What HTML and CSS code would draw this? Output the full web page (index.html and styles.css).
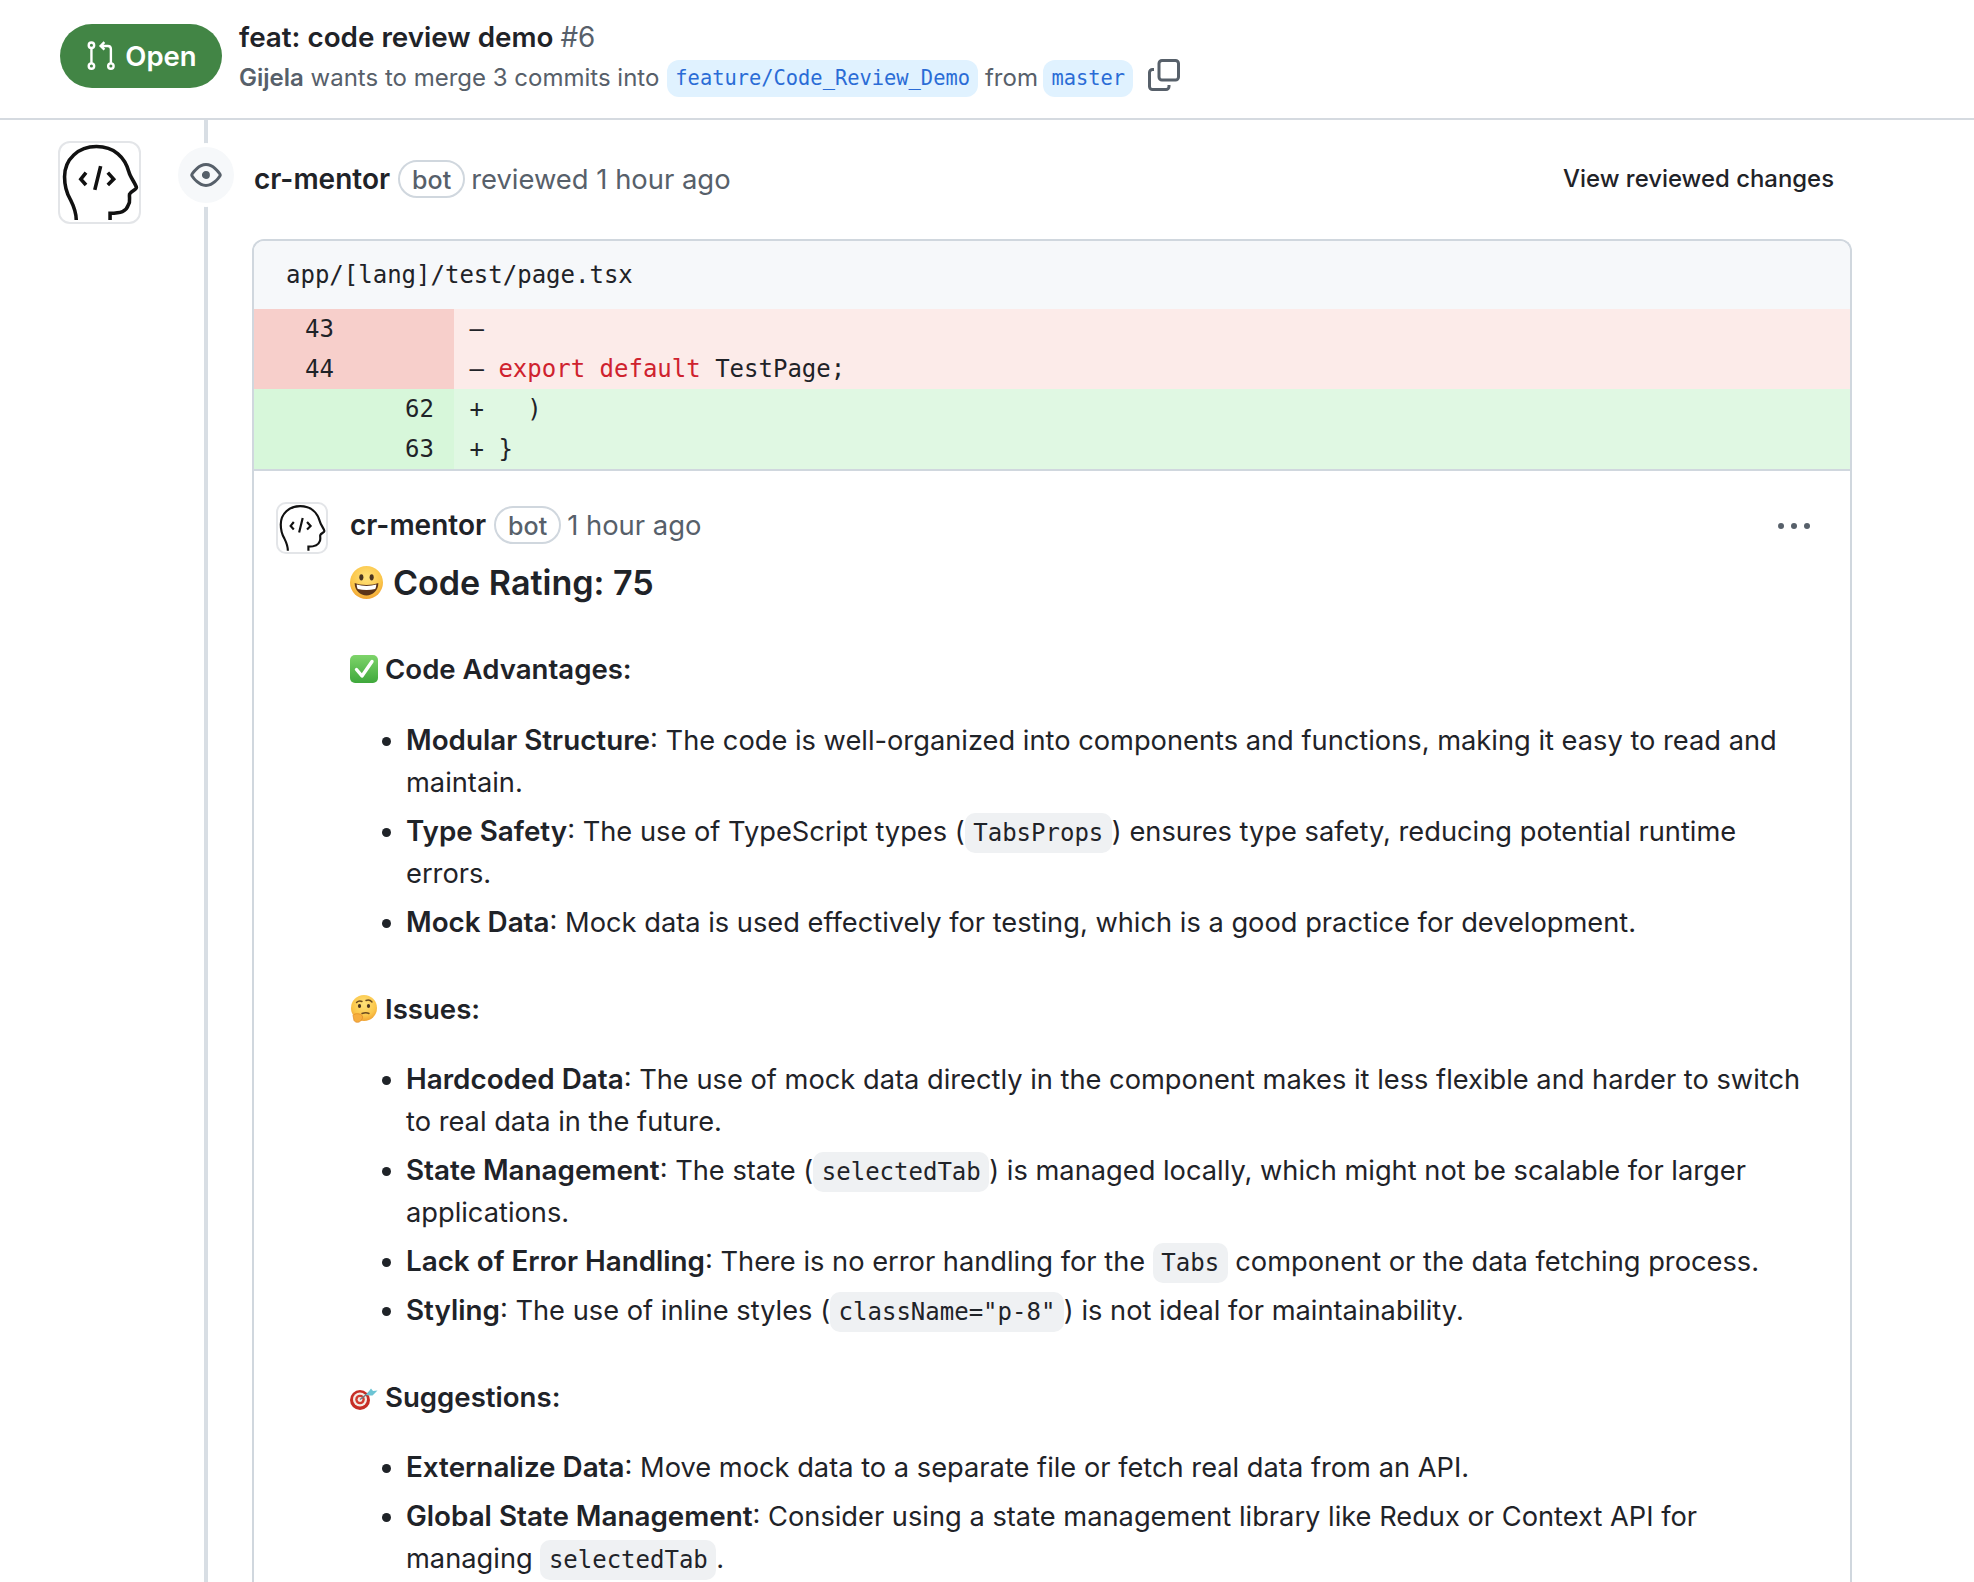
FILE: index.html
```html
<!DOCTYPE html>
<html lang="en">
<head>
<meta charset="utf-8">
<title>feat: code review demo #6</title>
<link rel="stylesheet" href="styles.css">
</head>
<body>
<svg class="defs" width="0" height="0" aria-hidden="true">
  <defs>
    <radialGradient id="faceGrad" cx="50%" cy="35%" r="70%">
      <stop offset="0%" stop-color="#ffe27a"/><stop offset="65%" stop-color="#fbc64a"/><stop offset="100%" stop-color="#ee9b2d"/>
    </radialGradient>
    <linearGradient id="checkGrad" x1="0" y1="0" x2="0" y2="1">
      <stop offset="0%" stop-color="#7ed46a"/><stop offset="100%" stop-color="#3fa83c"/>
    </linearGradient>
    <symbol id="head" viewBox="28 21 243 243">
      <path fill="none" stroke="#111" stroke-width="11" d="M78 258C78 235 70 215 60 195C48 175 42 150 42 125C42 70 85 32 140 32C195 32 228 65 240 110C243 125 262 148 263 158C263 165 245 170 242 178C240 190 246 200 238 212C232 232 215 237 182 237V258"/>
      <path fill="none" stroke="#111" stroke-width="11" d="M108 112L92 132L108 150M153 92L135 165M175 112L193 132L175 150"/>
    </symbol>
    <symbol id="grin" viewBox="0 0 32 32">
      <circle cx="16" cy="16" r="16" fill="url(#faceGrad)"/>
      <ellipse cx="11" cy="11" rx="2" ry="3" fill="#4a3420"/><ellipse cx="21" cy="11" rx="2" ry="3" fill="#4a3420"/>
      <path d="M4.500 16.500C10 19 22 19 27.500 16.500C27.500 24 22 28.500 16 28.500C10 28.500 4.500 24 4.500 16.500Z" fill="#5c3418"/>
      <path d="M6.500 18C12 19.800 20 19.800 25.500 18C25.500 19.800 25 21.400 24.400 22.400C19 23.600 13 23.600 7.600 22.400C7 21.400 6.500 19.800 6.500 18Z" fill="#fff"/>
    </symbol>
    <symbol id="check" viewBox="0 0 28 28">
      <rect width="28" height="28" rx="5" fill="url(#checkGrad)"/>
      <path d="M6.500 14.500L12 21L22 6.500" fill="none" stroke="#fff" stroke-width="3.400" stroke-linecap="round" stroke-linejoin="round"/>
    </symbol>
    <symbol id="think" viewBox="0 0 28 28">
      <circle cx="14" cy="13" r="13" fill="url(#faceGrad)"/>
      <path d="M6.500 7.500Q9 5 12 6.500M16 5.500Q19.500 4 22 7" fill="none" stroke="#6b4a1e" stroke-width="1.400" stroke-linecap="round"/>
      <ellipse cx="9.500" cy="11" rx="1.600" ry="2" fill="#4a3420"/><ellipse cx="18.500" cy="11" rx="1.600" ry="2" fill="#4a3420"/>
      <path d="M12 18.500Q16 17 19 18.500" fill="none" stroke="#6b4a1e" stroke-width="1.400" stroke-linecap="round"/>
      <path d="M3 20.500C5 18 8.500 18.500 11 19.500C13 20.500 13 23 11.500 25C9.500 28 5.500 28 4 25.500Z" fill="#f6ad3f" stroke="#e08a26" stroke-width=".7"/>
    </symbol>
    <symbol id="dart" viewBox="0 0 28 28">
      <circle cx="10" cy="17" r="10" fill="#c62e26"/>
      <circle cx="10" cy="16.500" r="7" fill="#f3ece6"/>
      <circle cx="10" cy="16.500" r="4.800" fill="#d23a2f"/>
      <circle cx="10" cy="16.500" r="2.400" fill="#f3ece6"/>
      <path d="M10 16.500L21 8" stroke="#6b7c86" stroke-width="1.400"/>
      <path d="M16 12L21 5.500L23 8L27.500 7.500L22.500 12.500L19.500 12.500Z" fill="#6cc4d4"/>
    </symbol>
  </defs>
</svg>

<div class="page">
  <header class="pr-header">
    <div class="state-pill">
      <svg class="pr-icon" viewBox="55 35 85 87" fill="none" stroke="#fff" stroke-width="7">
        <circle cx="68" cy="47" r="8"/><circle cx="68" cy="108" r="8"/><path d="M68 55V100"/>
        <circle cx="125" cy="108" r="8"/><path d="M125 100V58Q125 49 116 49H96M106 38L95 49L106 60"/>
      </svg>
      <span>Open</span>
    </div>
    <div class="pr-info">
      <h1 class="pr-title">feat: code review demo <span class="pr-number">#6</span></h1>
      <div class="pr-meta">
        <span class="meta-text"><strong>Gijela</strong> wants to merge 3 commits into</span>
        <span class="branch">feature/Code_Review_Demo</span>
        <span class="meta-text">from</span>
        <span class="branch">master</span>
        <svg class="copy" viewBox="0 0 32 32" fill="none" stroke="#57606a" stroke-width="3">
          <rect x="11" y="1.500" width="19.500" height="19.500" rx="3"/>
          <path d="M6 10.500H4.500a3 3 0 0 0-3 3V27.500a3 3 0 0 0 3 3H18a3 3 0 0 0 3-3V26"/>
        </svg>
      </div>
    </div>
  </header>

  <div class="thread">
    <div class="avatar avatar-lg"><svg><use href="#head"/></svg></div>
    <main class="track">
      <div class="eye-badge">
        <svg viewBox="0 0 16 16" fill="#57606a"><path d="M8 2c1.981 0 3.671.992 4.933 2.078 1.27 1.091 2.187 2.345 2.637 3.023a1.62 1.62 0 0 1 0 1.798c-.45.678-1.367 1.932-2.637 3.023C11.67 13.008 9.981 14 8 14c-1.981 0-3.671-.992-4.933-2.078C1.797 10.83.88 9.576.43 8.898a1.62 1.62 0 0 1 0-1.798c.45-.677 1.367-1.931 2.637-3.022C4.33 2.992 6.019 2 8 2ZM1.679 7.932a.12.12 0 0 0 0 .136c.411.622 1.241 1.75 2.366 2.717C5.176 11.758 6.527 12.5 8 12.5c1.473 0 2.825-.742 3.955-1.715 1.124-.967 1.954-2.096 2.366-2.717a.12.12 0 0 0 0-.136c-.412-.621-1.242-1.75-2.366-2.717C10.824 4.242 9.473 3.500 8 3.500c-1.473 0-2.825.742-3.955 1.715-1.124.967-1.954 2.096-2.366 2.717ZM8 10a2 2 0 1 1-.001-3.999A2 2 0 0 1 8 10Z"/></svg>
      </div>
      <div class="review-head">
        <div class="byline">
          <strong class="author">cr-mentor</strong>
          <span class="bot">bot</span>
          <span class="muted">reviewed 1 hour ago</span>
        </div>
        <span class="view-link">View reviewed changes</span>
      </div>

      <section class="review-box">
        <div class="file-name">app/[lang]/test/page.tsx</div>
        <div class="diff">
          <div class="row del"><span class="num">43</span><span class="num"></span><span class="code">–</span></div>
          <div class="row del"><span class="num">44</span><span class="num"></span><span class="code">– <span class="kw">export default</span> TestPage;</span></div>
          <div class="row add"><span class="num"></span><span class="num">62</span><span class="code">+   )</span></div>
          <div class="row add"><span class="num"></span><span class="num">63</span><span class="code">+ }</span></div>
        </div>

        <article class="comment">
          <div class="avatar avatar-sm"><svg><use href="#head"/></svg></div>
          <div class="comment-main">
            <div class="comment-head">
              <strong class="author">cr-mentor</strong>
              <span class="bot">bot</span>
              <span class="muted">1 hour ago</span>
              <span class="dots"><i></i><i></i><i></i></span>
            </div>
            <h2 class="rating"><svg class="emoji-grin"><use href="#grin"/></svg>Code Rating: 75</h2>

            <h3 class="section first"><svg class="emoji"><use href="#check"/></svg>Code Advantages:</h3>
            <ul>
              <li><b>Modular Structure</b>: The code is well-organized into components and functions, making it easy to read and maintain.</li>
              <li><b>Type Safety</b>: The use of TypeScript types (<code>TabsProps</code>) ensures type safety, reducing potential runtime errors.</li>
              <li><b>Mock Data</b>: Mock data is used effectively for testing, which is a good practice for development.</li>
            </ul>

            <h3 class="section"><svg class="emoji"><use href="#think"/></svg>Issues:</h3>
            <ul>
              <li><b>Hardcoded Data</b>: The use of mock data directly in the component makes it less flexible and harder to switch to real data in the future.</li>
              <li><b>State Management</b>: The state (<code>selectedTab</code>) is managed locally, which might not be scalable for larger applications.</li>
              <li><b>Lack of Error Handling</b>: There is no error handling for the <code>Tabs</code> component or the data fetching process.</li>
              <li><b>Styling</b>: The use of inline styles (<code>className="p-8"</code>) is not ideal for maintainability.</li>
            </ul>

            <h3 class="section"><svg class="emoji"><use href="#dart"/></svg>Suggestions:</h3>
            <ul>
              <li><b>Externalize Data</b>: Move mock data to a separate file or fetch real data from an API.</li>
              <li><b>Global State Management</b>: Consider using a state management library like Redux or Context API for managing <code>selectedTab</code>.</li>
            </ul>
          </div>
        </article>
      </section>
    </main>
  </div>
</div>
</body>
</html>
```
FILE: styles.css
```css
* { box-sizing: border-box; }
html, body { margin: 0; padding: 0; background: #fff; }
body { font-family: Inter, "Liberation Sans", sans-serif; color: #1f2328; font-size: 27.250px; }
.defs { position: absolute; }
.page { width: 1974px; height: 1582px; overflow: hidden; }

.pr-header { display: flex; gap: 17px; height: 120px; padding: 24px 0 0 60px; border-bottom: 2px solid #d5dae0; }
.state-pill { display: flex; align-items: center; justify-content: center; gap: 9px; width: 162px; height: 64px; padding-left: 2px; border-radius: 32px; background: #428545; color: #fff; font-size: 27.500px; font-weight: 600; }
.pr-icon { width: 29px; height: 30px; }
.pr-info { display: flex; flex-direction: column; }
.pr-title { margin: 0; height: 36px; line-height: 26px; font-size: 27.800px; font-weight: 600; }
.pr-number { font-weight: 400; color: #57606a; }
.pr-meta { display: flex; align-items: center; gap: 8px; color: #57606a; font-size: 24px; white-space: nowrap; }
.meta-text { position: relative; top: -1px; }
.branch + .meta-text { margin: 0 -2.500px 0 -1px; }
.pr-meta strong { font-weight: 600; }
.branch { padding: 0 8px; height: 37px; line-height: 37px; border-radius: 12px; background: #e0f2ff; color: #2a6cd6; font-family: "DejaVu Sans Mono", monospace; font-size: 20.400px; }
.copy { width: 32px; height: 32px; margin: -8px 0 0 6.500px; }

.thread { display: flex; height: 1462px; padding-left: 58px; }
.avatar { flex: none; border: 2px solid #e3e5e8; background: #fff; overflow: hidden; }
.avatar svg { display: block; width: 100%; height: 100%; }
.avatar-lg { width: 83px; height: 83px; margin-top: 21px; border-radius: 12px; }
.avatar-sm { width: 52px; height: 52px; border-radius: 10px; }

.track { position: relative; width: 1648px; margin-left: 63px; padding-left: 44px; border-left: 4px solid #d8dee4; }
.eye-badge { position: absolute; left: -34px; top: 23px; width: 64px; height: 64px; display: flex; align-items: center; justify-content: center; border: 4px solid #fff; border-radius: 50%; background: #f6f8fa; }
.eye-badge svg { width: 32px; height: 32px; }

.review-head { display: flex; align-items: center; justify-content: space-between; height: 119px; padding: 0 18px 2px 2px; }
.byline, .comment-head { display: flex; align-items: center; gap: 8px; white-space: nowrap; }
.author { font-weight: 600; font-size: 28px; }
.bot { display: inline-block; height: 38px; padding: 0 12px; margin-right: -2px; line-height: 36px; border: 2px solid #d0d7de; border-radius: 19px; font-size: 25px; font-weight: 500; color: #57606a; }
.muted { color: #57606a; font-size: 27.400px; }
.view-link { font-size: 23.900px; font-weight: 500; }

.review-box { width: 1600px; border: 2px solid #d0d7de; border-bottom: none; border-radius: 12px 12px 0 0; }
.file-name { height: 68px; line-height: 68px; padding-left: 32px; background: #f6f8fa; border-radius: 10px 10px 0 0; font-family: "DejaVu Sans Mono", monospace; font-size: 24px; }
.diff { border-bottom: 2px solid #d0d7de; font-family: "DejaVu Sans Mono", monospace; font-size: 24px; }
.row { display: flex; height: 40px; line-height: 40px; white-space: pre; }
.num { width: 100px; padding-right: 20px; text-align: right; }
.code { flex: 1; padding-left: 15.500px; }
.del { background: #fcebe9; }
.del .num { background: #f7cfcb; }
.add { background: #e0f8e3; }
.add .num { background: #d7f7da; }
.kw { color: #cf222e; }

.comment { display: flex; gap: 22px; padding: 31px 0 60px 22px; }
.comment-main { flex: 1; padding-right: 37px; }
.comment-head { position: relative; height: 46px; }
.dots { position: absolute; right: 3px; top: 21px; display: flex; gap: 7px; }
.dots i { display: block; width: 6px; height: 6px; border-radius: 50%; background: #57606a; }
.rating { display: flex; align-items: center; gap: 10px; margin: 8px 0 0; height: 52px; font-size: 34.100px; font-weight: 600; }
.emoji-grin { width: 33px; height: 33px; flex: none; }
.section { display: flex; align-items: center; gap: 7px; margin: 45px 0 0; height: 42px; font-size: 27.600px; font-weight: 600; }
.section.first { margin-top: 40px; }
.emoji { width: 28px; height: 28px; flex: none; }
ul { margin: 28px 0 -1px; padding: 1px 0 0 56px; }
.section.first + ul { margin-top: 29px; }
li { line-height: 42px; margin-bottom: 7px; }
li:last-child { margin-bottom: 0; }
b { font-size: 27.800px; font-weight: 600; line-height: 1; }
code { padding: 6px 8.500px; line-height: 1; border-radius: 10px; background: #eff1f3; font-family: "DejaVu Sans Mono", monospace; font-size: 24px; }
```
